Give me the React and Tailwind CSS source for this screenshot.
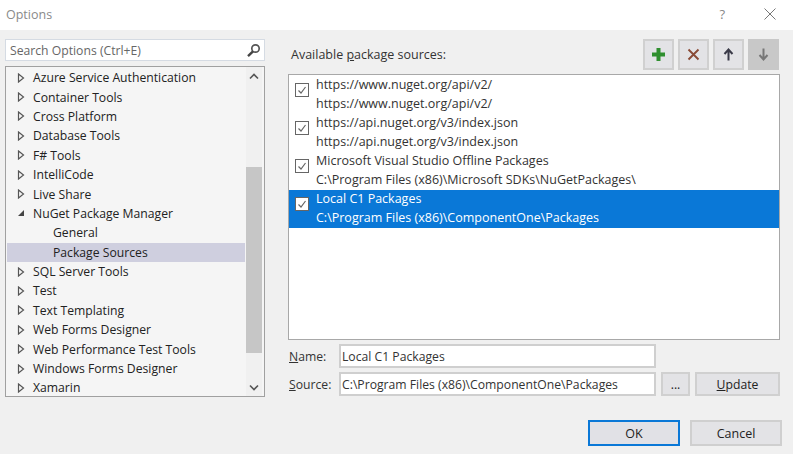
import { useState } from 'react'

const treeItems = [
  { label: 'Azure Service Authentication', arrow: 'closed' },
  { label: 'Container Tools', arrow: 'closed' },
  { label: 'Cross Platform', arrow: 'closed' },
  { label: 'Database Tools', arrow: 'closed' },
  { label: 'F# Tools', arrow: 'closed' },
  { label: 'IntelliCode', arrow: 'closed' },
  { label: 'Live Share', arrow: 'closed' },
  { label: 'NuGet Package Manager', arrow: 'open' },
  { label: 'General', child: true },
  { label: 'Package Sources', child: true, active: true },
  { label: 'SQL Server Tools', arrow: 'closed' },
  { label: 'Test', arrow: 'closed' },
  { label: 'Text Templating', arrow: 'closed' },
  { label: 'Web Forms Designer', arrow: 'closed' },
  { label: 'Web Performance Test Tools', arrow: 'closed' },
  { label: 'Windows Forms Designer', arrow: 'closed' },
  { label: 'Xamarin', arrow: 'closed' },
]

const sources = [
  { name: 'https://www.nuget.org/api/v2/', path: 'https://www.nuget.org/api/v2/' },
  { name: 'https://api.nuget.org/v3/index.json', path: 'https://api.nuget.org/v3/index.json' },
  { name: 'Microsoft Visual Studio Offline Packages', path: 'C:\\Program Files (x86)\\Microsoft SDKs\\NuGetPackages\\' },
  { name: 'Local C1 Packages', path: 'C:\\Program Files (x86)\\ComponentOne\\Packages', selected: true },
]

function Arrow({ type }) {
  if (type === 'open') {
    return (
      <svg width="8" height="8" viewBox="0 0 8 8" className="shrink-0">
        <path d="M7 1V7H1Z" fill="#444" />
      </svg>
    )
  }
  return (
    <svg width="8" height="10" viewBox="0 0 8 10" className="shrink-0">
      <path d="M1.5 1L6.5 5L1.5 9Z" fill="none" stroke="#555" strokeWidth="1.2" />
    </svg>
  )
}

function Check() {
  return (
    <span className="mt-[7px] flex h-[14px] w-[14px] shrink-0 items-center justify-center border border-[#666] bg-white">
      <svg width="10" height="10" viewBox="0 0 10 10">
        <path d="M1.5 5.5L4 8L8.5 2" fill="none" stroke="#666" strokeWidth="1.2" />
      </svg>
    </span>
  )
}

function ToolButton({ disabled, children }) {
  return (
    <div className={`flex h-[31px] w-[31px] items-center justify-center border-2 ${disabled ? 'border-[#c8c8c8] bg-[#c8c8c8]' : 'border-[#d0d0d0] bg-[#e3e3e6]'}`}>
      {children}
    </div>
  )
}

function Field({ hot, rest, value }) {
  return (
    <div className="flex h-6 items-center">
      <span className="w-[50px] text-[#333]">
        <span className="underline">{hot}</span>{rest}
      </span>
      <div className="flex h-6 w-[317px] items-center border-2 border-[#cfcfcf] bg-white pl-[1px] text-[#333]">
        {value}
      </div>
    </div>
  )
}

export default function App() {
  const [selected] = useState(3)

  return (
    <div className="flex h-[454px] w-[793px] flex-col overflow-hidden bg-[#f0f0f0] text-[12.5px] leading-[19px] text-[#222] [font-family:'Open_Sans','Noto_Sans',sans-serif]">
      {/* Title bar */}
      <div className="flex h-[30px] items-center justify-between bg-white pb-[2px] pl-[6px] pr-[17px]">
        <span className="text-[#8a8a8a]">Options</span>
        <div className="flex items-center gap-[39px]">
          <span className="text-[13px] text-[#888]">?</span>
          <svg width="12" height="12" viewBox="0 0 12 12">
            <path d="M.5.5L11.5 11.5M11.5.5L.5 11.5" stroke="#777" strokeWidth="1" />
          </svg>
        </div>
      </div>

      <div className="flex flex-1 pl-[5px] pt-[9px]">
        {/* Left side */}
        <div className="flex w-[260px] flex-col">
          <div className="flex h-[22px] items-center justify-between border border-[#d5dbe3] bg-white pl-[4px] pr-[3px] text-[12.2px] text-[#666]">
            <span>Search Options (Ctrl+E)</span>
            <svg width="15" height="15" viewBox="0 0 15 15">
              <circle cx="9.5" cy="5.5" r="3.7" fill="none" stroke="#555" strokeWidth="1.7" />
              <path d="M7 8.3L2 13.2" stroke="#444" strokeWidth="2.4" />
            </svg>
          </div>
          <div className="mt-[5px] flex h-[331px] border border-[#a0a0a0] bg-[#f5f5f5] pr-[2px] text-[12.2px]">
            <div className="flex-1 pl-[1px] pt-[1px]">
              {treeItems.map((item) => (
                <div
                  key={item.label}
                  className={`flex h-[19.4px] items-center whitespace-nowrap ${item.active ? 'bg-[#cfcfdf]' : ''}`}
                >
                  <span className="flex w-[26px] shrink-0 justify-center pl-[1px]">
                    {item.arrow && <Arrow type={item.arrow} />}
                  </span>
                  <span className={item.child ? 'pl-[20px]' : ''}>{item.label}</span>
                </div>
              ))}
            </div>
            <div className="ml-[1px] flex w-[16px] flex-col items-center bg-[#f0f0f0]">
              <svg width="16" height="17" viewBox="0 0 16 17" className="mt-[1px] shrink-0">
                <path d="M4 10.5L8 6.5L12 10.5" fill="none" stroke="#555" strokeWidth="1.6" />
              </svg>
              <div className="mt-[82px] h-[186px] w-[16px] shrink-0 bg-[#c6c6c6]" />
              <svg width="16" height="17" viewBox="0 0 16 17" className="mt-[26px] shrink-0">
                <path d="M4 6.5L8 10.5L12 6.5" fill="none" stroke="#555" strokeWidth="1.6" />
              </svg>
            </div>
          </div>
        </div>

        {/* Right side */}
        <div className="ml-[23px] flex w-[492px] flex-col">
          <div className="flex h-[31px] items-center justify-between pl-[3px] pr-[1px]">
            <span className="text-[#333]">
              Available <span className="underline">p</span>ackage sources:
            </span>
            <div className="flex gap-[4px]">
              <ToolButton>
                <svg width="15" height="15" viewBox="0 0 15 15">
                  <path d="M5.5 1H9.5V5.5H14V9.5H9.5V14H5.5V9.5H1V5.5H5.5Z" fill="#2f8f2f" />
                </svg>
              </ToolButton>
              <ToolButton>
                <svg width="13" height="13" viewBox="0 0 13 13">
                  <path d="M1.5 1.5L11.5 11.5M11.5 1.5L1.5 11.5" stroke="#8a4a36" strokeWidth="1.9" />
                </svg>
              </ToolButton>
              <ToolButton>
                <svg width="11" height="13" viewBox="0 0 11 13">
                  <path d="M5.5 12.5V2.5M1.5 6L5.5 1.5L9.5 6" fill="none" stroke="#3a3a48" strokeWidth="2" />
                </svg>
              </ToolButton>
              <ToolButton disabled>
                <svg width="11" height="13" viewBox="0 0 11 13">
                  <path d="M5.5 .5V10.5M1.5 7L5.5 11.5L9.5 7" fill="none" stroke="#777" strokeWidth="2" />
                </svg>
              </ToolButton>
            </div>
          </div>

          <div className="mt-[4px] h-[266px] border border-[#a8a8a8] bg-white pt-[1px]">
            {sources.map((source, i) => (
              <div
                key={source.name}
                className={`flex h-[38px] items-start pl-[6px] ${i === selected ? 'bg-[#0a78d7] text-white' : 'text-[#333]'}`}
              >
                <Check />
                <div className="ml-[7px] leading-[18.7px] whitespace-nowrap">
                  <div>{source.name}</div>
                  <div>{source.path}</div>
                </div>
              </div>
            ))}
          </div>

          <div className="mt-[4px] flex flex-col gap-[4px] pl-[1px] text-[12.2px]">
            <Field hot="N" rest="ame:" value="Local C1 Packages" />
            <div className="flex items-center">
              <Field hot="S" rest="ource:" value="C:\Program Files (x86)\ComponentOne\Packages" />
              <div className="ml-[5px] flex h-6 w-[29px] items-center justify-center border-2 border-[#d0d0d0] bg-[#e3e3e6]">...</div>
              <div className="ml-[5px] flex h-6 w-[85px] items-center justify-center border-2 border-[#d0d0d0] bg-[#e3e3e6]">
                <span><span className="underline">U</span>pdate</span>
              </div>
            </div>
          </div>

          <div className="-mr-[2px] mt-[24px] flex justify-end gap-[10px]">
            <div className="flex h-[26px] w-[92px] items-center justify-center border-2 border-[#0a78d7] bg-[#e1e1e6]">OK</div>
            <div className="flex h-[26px] w-[92px] items-center justify-center border-2 border-[#cfcfcf] bg-[#e3e3e6]">Cancel</div>
          </div>
        </div>
      </div>
    </div>
  )
}
